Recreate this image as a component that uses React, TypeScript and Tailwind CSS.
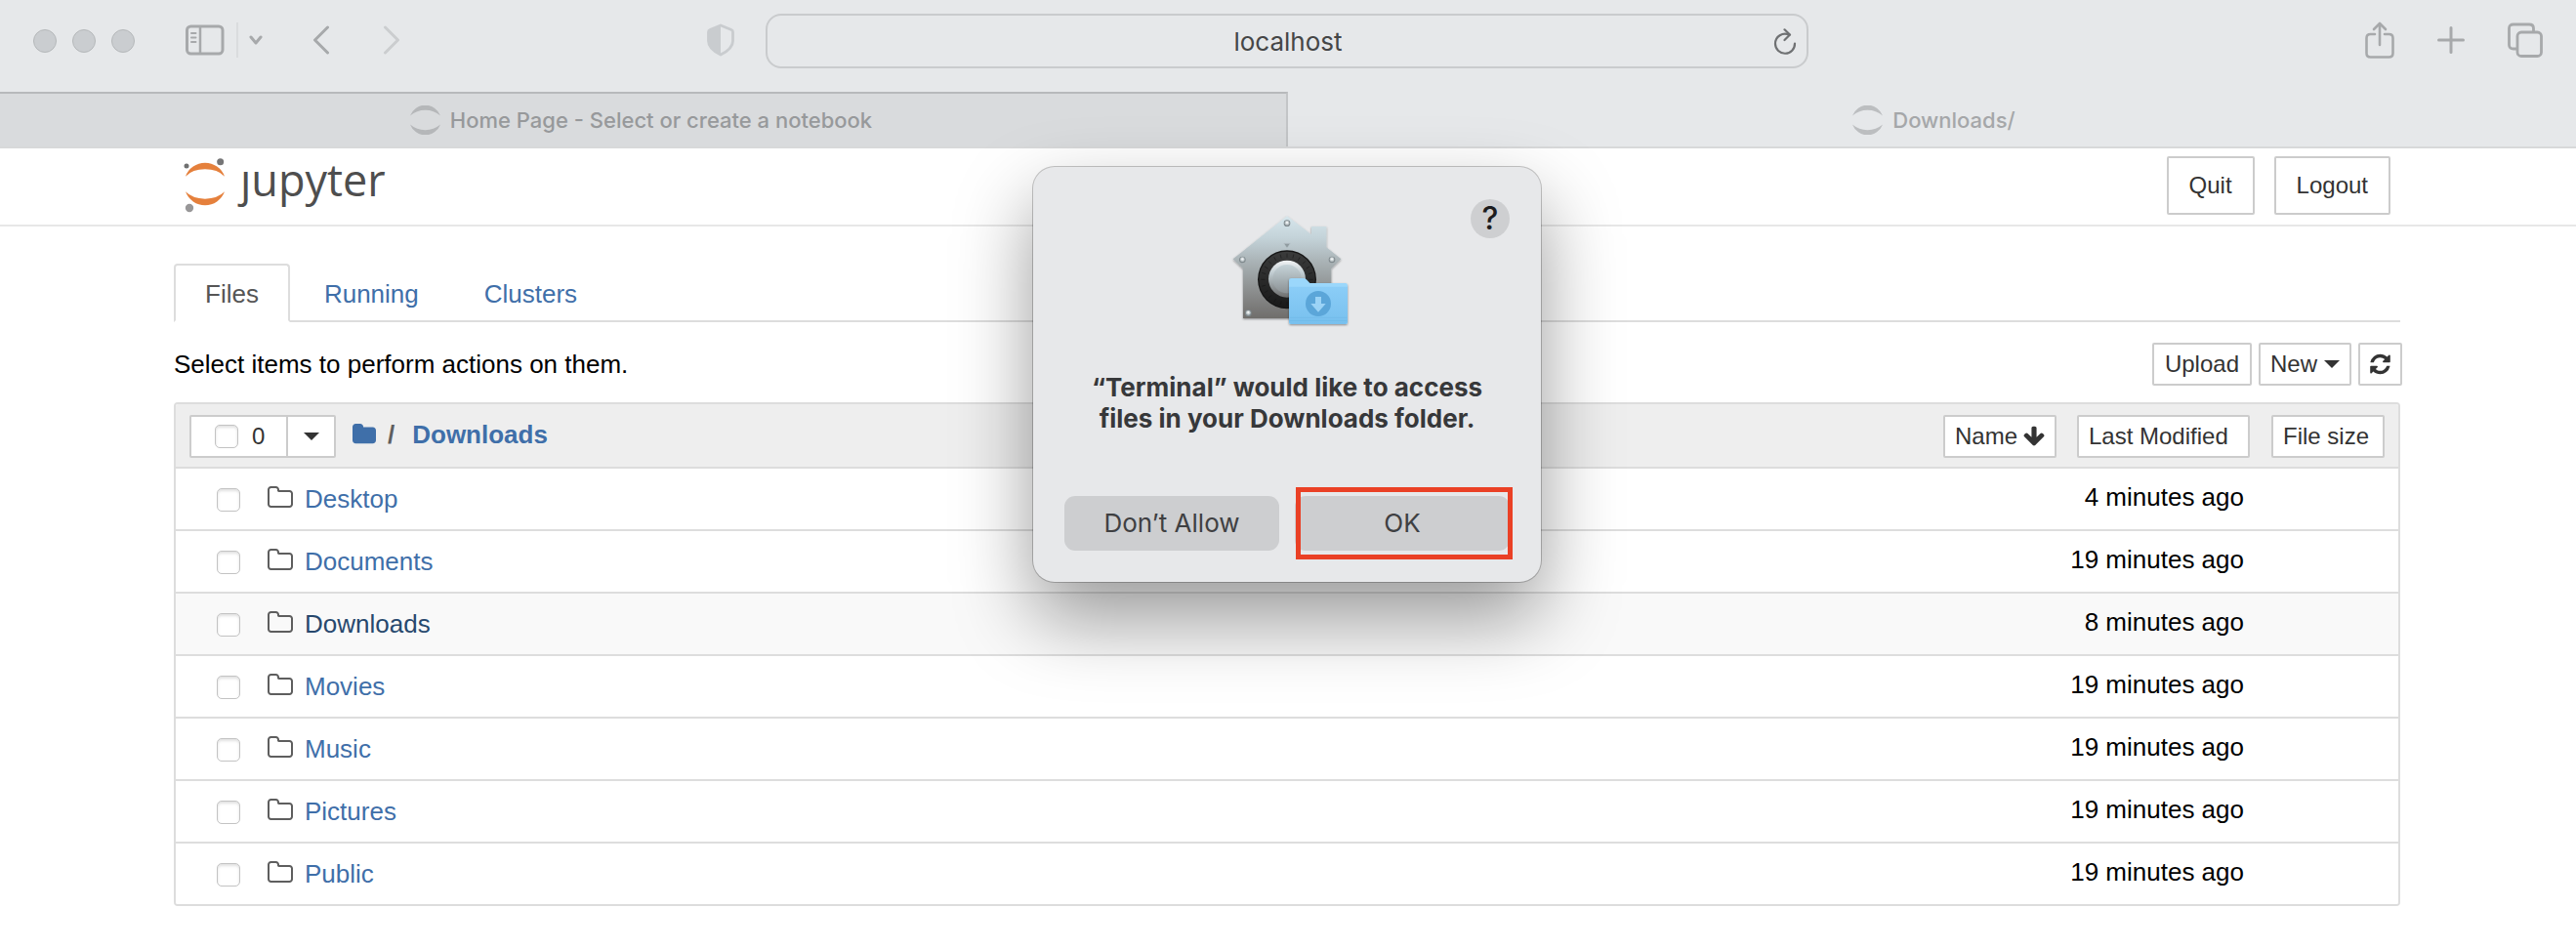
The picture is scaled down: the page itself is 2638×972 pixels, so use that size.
import React from "react";

const FILES = [
  { name: "Desktop", modified: "4 minutes ago" },
  { name: "Documents", modified: "19 minutes ago" },
  { name: "Downloads", modified: "8 minutes ago", hovered: true },
  { name: "Movies", modified: "19 minutes ago" },
  { name: "Music", modified: "19 minutes ago" },
  { name: "Pictures", modified: "19 minutes ago" },
  { name: "Public", modified: "19 minutes ago" },
];

const CHECKBOX =
  "size-6 shrink-0 appearance-none rounded-[5px] border border-[#c3c3c3] bg-white shadow-[inset_0_2px_3px_rgba(0,0,0,0.12)]";

const BUTTON =
  "flex h-11 items-center rounded-[2px] border-2 border-[#ccc] bg-white text-[24px] leading-9 font-normal text-[#333]";

function SidebarIcon() {
  return (
    <svg className="h-8 w-10" viewBox="0 0 40 32" fill="none" stroke="#a7a9ab" strokeWidth="3">
      <rect x="1.5" y="2" width="36.5" height="28" rx="4" />
      <path d="M15 2v28" strokeWidth="2.5" />
      <path d="M6 9h4.500M6 13.500h4.500M6 18h4.500" strokeWidth="2" strokeLinecap="round" />
    </svg>
  );
}

function ShieldIcon() {
  return (
    <svg className="h-[34px] w-7" viewBox="0 0 28 34">
      <path
        d="M14 2 25 6.500Q26.500 7 26.500 9V18Q26.500 26 14 32Q1.500 26 1.500 18V9Q1.500 7 3 6.500Z"
        fill="none"
        stroke="#c9cccf"
        strokeWidth="2.800"
        strokeLinejoin="round"
      />
      <path d="M14 2 3 6.500Q1.500 7 1.500 9V18Q1.500 26 14 32Z" fill="#c9cccf" />
    </svg>
  );
}

function RingIcon({ className }: { className: string }) {
  return (
    <svg className={"h-[30px] w-[31px] " + className} viewBox="0 0 31 30" fill="currentColor">
      <path d="M0 10.500A16.500 16.500 0 0 1 31 10.500A24 24 0 0 0 0 10.500Z" />
      <path d="M0 19.500A16.500 16.500 0 0 0 31 19.500A24 24 0 0 1 0 19.500Z" />
    </svg>
  );
}

function JupyterMark() {
  return (
    <svg className="h-[66px] w-[54px]" viewBox="18 0 162 198">
      <path d="M30 86A64 64 0 0 1 150 86Q128 64 90 64T30 86Z" fill="#e5803c" />
      <path d="M30 133A64 64 0 0 0 150 133Q128 155 90 155T30 133Z" fill="#e5803c" />
      <circle cx="33" cy="54" r="7.500" fill="#6f7070" />
      <circle cx="137" cy="41" r="10.500" fill="#767677" />
      <circle cx="42" cy="183" r="12.500" fill="#989798" />
    </svg>
  );
}

function FolderOutline() {
  return (
    <svg className="mb-[2px] size-7 shrink-0" viewBox="0 0 1792 1792" fill="#5e5e5e">
      <path d="M1600 1312v-704q0-40-28-68t-68-28h-704q-40 0-68-28t-28-68v-64q0-40-28-68t-68-28h-320q-40 0-68 28t-28 68v960q0 40 28 68t68 28h1216q40 0 68-28t28-68zm128-704v704q0 92-66 158t-158 66h-1216q-92 0-158-66t-66-158v-960q0-92 66-158t158-66h320q92 0 158 66t66 158v32h672q92 0 158 66t66 158z" />
    </svg>
  );
}

function FolderSolid() {
  return (
    <svg className="h-[26px] w-6" viewBox="64 0 1664 1792" fill="#3f6fa9">
      <path d="M1728 608v704q0 92-66 158t-158 66h-1216q-92 0-158-66t-66-158v-960q0-92 66-158t158-66h320q92 0 158 66t66 158v32h672q92 0 158 66t66 158z" />
    </svg>
  );
}

function ArrowDown() {
  return (
    <svg className="h-6 w-[22px]" viewBox="76 0 1640 1792" fill="#333">
      <path d="M1675 832q0 53-37 90l-651 652q-39 37-91 37-53 0-90-37l-651-652q-38-36-38-90 0-53 38-91l74-75q39-37 91-37 53 0 90 37l294 294v-704q0-52 38-90t90-38h128q52 0 90 38t38 90v704l294-294q37-37 90-37 52 0 91 37l75 75q37 39 37 91z" />
    </svg>
  );
}

function Refresh() {
  return (
    <svg className="h-6 w-[21px]" viewBox="128 0 1536 1792" fill="#333">
      <path d="M1639 1056q0 5-1 7-64 268-268 434.500t-478 166.500q-146 0-282.500-55t-243.500-157l-129 129q-19 19-45 19t-45-19-19-45v-448q0-26 19-45t45-19h448q26 0 45 19t19 45-19 45l-137 137q71 66 161 102t187 36q134 0 250-65t186-179q11-17 53-117 8-23 30-23h192q13 0 22.500 9.500t9.500 22.500zm25-800v448q0 26-19 45t-45 19h-448q-26 0-45-19t-19-45 19-45l138-138q-148-137-349-137-134 0-250 65t-186 179q-11 17-53 117-8 23-30 23h-199q-13 0-22.500-9.500t-9.500-22.500v-7q65-268 270-434.500t480-166.500q146 0 284 55.500t245 156.500l130-129q19-19 45-19t45 19 19 45z" />
    </svg>
  );
}

function Caret() {
  return (
    <svg className="h-2 w-4" viewBox="0 0 16 8" fill="#333">
      <path d="M0 0h16L8 8Z" />
    </svg>
  );
}

function VaultHouse() {
  const ticks = Array.from({ length: 24 }, (_, i) => i * 15);
  return (
    <svg className="h-[130px] w-[136px]" viewBox="0 0 408 390">
      <defs>
        <linearGradient id="steel" x1="0" y1="0" x2="0" y2="1">
          <stop offset="0" stopColor="#d6e6ec" />
          <stop offset="0.22" stopColor="#c3d2d8" />
          <stop offset="0.45" stopColor="#a9b2b5" />
          <stop offset="0.75" stopColor="#8a8c8c" />
          <stop offset="1" stopColor="#6f6d6b" />
        </linearGradient>
        <linearGradient id="knob" x1="0" y1="0" x2="0" y2="1">
          <stop offset="0" stopColor="#f2f4f5" />
          <stop offset="0.35" stopColor="#bfcbd0" />
          <stop offset="1" stopColor="#6d6e6e" />
        </linearGradient>
        <linearGradient id="knobFace" x1="0" y1="0" x2="0" y2="1">
          <stop offset="0" stopColor="#c6d4d9" />
          <stop offset="1" stopColor="#8b9194" />
        </linearGradient>
        <linearGradient id="dial" x1="0" y1="0" x2="0" y2="1">
          <stop offset="0" stopColor="#3a3b3b" />
          <stop offset="1" stopColor="#191919" />
        </linearGradient>
        <linearGradient id="folder" x1="0" y1="0" x2="0" y2="1">
          <stop offset="0" stopColor="#8bcdf7" />
          <stop offset="1" stopColor="#78c0ee" />
        </linearGradient>
        <filter id="drop" x="-10%" y="-10%" width="120%" height="120%">
          <feDropShadow dx="0" dy="3" stdDeviation="3" floodOpacity="0.4" />
        </filter>
      </defs>
      <path
        d="M204 28 279 85V60H325V124L370 160 340 189V342H69V189L38 160Z"
        fill="url(#steel)"
        filter="url(#drop)"
      />
      <path d="M194 112H214L204 127Z" fill="#8f9b9f" stroke="#b9c6cb" strokeWidth="2" />
      <circle cx="204" cy="223" r="90" fill="#161616" />
      <circle cx="204" cy="223" r="86" fill="url(#dial)" />
      {ticks.map((angle) => (
        <path
          key={angle}
          d="M204 143v12"
          stroke="#111"
          strokeOpacity="0.7"
          strokeWidth="2"
          transform={"rotate(" + angle + " 204 223)"}
        />
      ))}
      <circle cx="204" cy="221" r="57" fill="url(#knob)" />
      <circle cx="204" cy="221" r="44" fill="url(#knobFace)" />
      {[
        [204, 50],
        [67, 162],
        [342, 162],
        [85, 326],
      ].map(([x, y]) => (
        <g key={x + "-" + y}>
          <circle cx={x} cy={y} r="10" fill="#7f898d" />
          <circle cx={x} cy={y - 1} r="7" fill="#c3cbce" />
          <circle cx={x} cy={y - 2} r="3.500" fill="#f0f3f4" />
        </g>
      ))}
      <g filter="url(#drop)">
        <path d="M210 226Q210 219 217 219H255Q261 219 265 224L274 234H383Q390 234 390 241V353Q390 360 383 360H217Q210 360 210 353Z" fill="#9bd7fb" />
        <path d="M210 245H390V353Q390 360 383 360H217Q210 360 210 353Z" fill="url(#folder)" />
      </g>
      <path d="M212 340H388M212 349H388" stroke="#69b2e3" strokeWidth="1.500" />
      <circle cx="300" cy="297" r="39" fill="#5ba6d9" />
      <path d="M291 276H309V297H323L300 323 277 297H291Z" fill="#9bd3f6" />
    </svg>
  );
}

function BrowserChrome() {
  return (
    <header className="bg-[#e6e8ea] font-[Inter,'Noto_Sans',sans-serif]">
      <div className="grid h-[94px] grid-cols-[1fr_40.5%_1fr] items-center pr-[2px] pb-[10px]">
        <div className="flex items-center pr-8 pl-[34px]">
          <div className="flex gap-4">
            {["Close", "Minimize", "Zoom"].map((label) => (
              <button key={label} aria-label={label} className="size-6 rounded-full border border-[#b5b8ba] bg-[#cacdd0]" />
            ))}
          </div>
          <div className="flex flex-1 items-center pb-[2px] pl-[52px]">
            <button aria-label="Sidebar"><SidebarIcon /></button>
            <span className="ml-3 h-9 w-[2px] bg-[#dadcde]" />
            <button aria-label="Tab groups" className="ml-[11px]">
              <svg className="h-[10px] w-[14px]" viewBox="0 0 14 10" fill="none" stroke="#a7a9ab" strokeWidth="3" strokeLinecap="round" strokeLinejoin="round">
                <path d="M2 2l5 6 5-6" />
              </svg>
            </button>
            <button aria-label="Back" className="ml-[51px]">
              <svg className="h-[30px] w-[18px]" viewBox="0 0 18 30" fill="none" stroke="#a7a9ab" strokeWidth="3" strokeLinecap="round" strokeLinejoin="round">
                <path d="M15.500 2 2.500 15l13 13" />
              </svg>
            </button>
            <button aria-label="Forward" className="ml-[54px]">
              <svg className="h-[30px] w-[18px]" viewBox="0 0 18 30" fill="none" stroke="#cbcdcf" strokeWidth="3" strokeLinecap="round" strokeLinejoin="round">
                <path d="M2.500 2 15.500 15l-13 13" />
              </svg>
            </button>
            <button aria-label="Privacy report" className="ml-auto"><ShieldIcon /></button>
          </div>
        </div>
        <div className="flex h-14 items-center rounded-[16px] border-2 border-[#c9cbcd] pr-[10px] pl-9">
          <input
            aria-label="Address"
            defaultValue="localhost"
            className="w-full min-w-0 flex-1 bg-transparent pt-[2px] text-center text-[26px] leading-8 text-[#454647] outline-none"
          />
          <button aria-label="Reload">
            <svg className="h-[27px] w-[24px]" viewBox="0 0 24 27" fill="none" stroke="#6f7173" strokeWidth="2.200" strokeLinecap="round" strokeLinejoin="round">
              <path d="M11.500 1.300l5.500 5.200-5.500 5.500" />
              <path d="M16.500 6.800A10 10 0 0 0 2 16A10 10 0 0 0 22 15.500" />
            </svg>
          </button>
        </div>
        <div className="flex items-center justify-end gap-[44px] pr-8 pb-[2px]">
          <button aria-label="Share">
            <svg className="h-[38px] w-[30px]" viewBox="0 0 30 38" fill="none" stroke="#a7a9ab" strokeWidth="2.600" strokeLinecap="round" strokeLinejoin="round">
              <path d="M10 13H5.500Q1.500 13 1.500 17V32.500Q1.500 36.500 5.500 36.500H24.500Q28.500 36.500 28.500 32.500V17Q28.500 13 24.500 13H20" />
              <path d="M15 24V2M9 8l6-6 6 6" />
            </svg>
          </button>
          <button aria-label="New tab">
            <svg className="size-7" viewBox="0 0 28 28" fill="none" stroke="#a7a9ab" strokeWidth="3" strokeLinecap="round">
              <path d="M14 1.500v25M1.500 14h25" />
            </svg>
          </button>
          <button aria-label="Tab overview">
            <svg className="h-9 w-9" viewBox="0 0 36 36" fill="none" stroke="#a7a9ab" strokeWidth="2.800" strokeLinejoin="round">
              <rect x="10" y="10" width="24.500" height="24.500" rx="4" />
              <path d="M10 27H6Q1.500 27 1.500 23V6Q1.500 2 6 2H22Q26.500 2 26.500 6V10" />
            </svg>
          </button>
        </div>
      </div>
      <div className="grid h-[58px] grid-cols-2 border-b-2 border-[#d8d9da] text-[22px] font-medium">
        <a href="#home" className="flex items-center justify-center gap-[10px] border-t-2 border-r-2 border-t-[#b7b9bb] border-r-[#c3c5c7] bg-[#d9dbdd] pr-1 text-[#97999b]">
          <RingIcon className="text-[#b5b7b9]" />
          Home Page - Select or create a notebook
        </a>
        <a href="#downloads" className="flex items-center justify-center gap-[10px] pt-[2px] pl-1 text-[#a5a7a9]">
          <RingIcon className="text-[#bcbec0]" />
          Downloads/
        </a>
      </div>
    </header>
  );
}

function PermissionDialog() {
  return (
    <div className="absolute inset-x-0 top-0 flex justify-center pt-[171px] pr-[2px]">
      <div
        role="alertdialog"
        aria-labelledby="permission-title"
        className="relative flex w-[520px] flex-col items-center rounded-[22px] bg-[#e7e8ea] px-8 pt-[41px] pb-8 font-[Inter,'Noto_Sans',sans-serif] shadow-[0_0_0_1px_rgba(0,0,0,0.22),0_36px_80px_rgba(0,0,0,0.4)]"
      >
        <button aria-label="Help" className="absolute top-[33px] right-8 size-10 rounded-full bg-[#cecfd1] text-[32px] leading-10 font-medium text-[#1c1c1e]">
          ?
        </button>
        <VaultHouse />
        <h2 id="permission-title" className="mt-[39px] text-center text-[26px] leading-8 font-bold whitespace-nowrap text-[#37383a]">
          “Terminal” would like to access
          <br />
          files in your Downloads folder.
        </h2>
        <div className="mt-[63px] grid w-full grid-cols-2 gap-4 text-[26px] text-[#3f4042]">
          <button className="h-14 rounded-[11px] bg-[#cdced0] pb-[2px]">Don’t Allow</button>
          <div className="relative">
            <button className="h-14 w-full rounded-[11px] bg-[#cdced0] pb-[2px]">OK</button>
            <span className="pointer-events-none absolute -inset-y-[9px] -right-[3px] left-px border-[5px] border-[#ea4025]" />
          </div>
        </div>
      </div>
    </div>
  );
}

export default function App() {
  return (
    <div className="relative min-h-screen overflow-hidden bg-white font-['Liberation_Sans',Arial,sans-serif] text-[26px] text-black">
      <BrowserChrome />

      <div className="flex h-20 items-start justify-between border-b-2 border-[#e7e7e7] pr-[190px] pl-[186px]">
        <a href="#jupyter" aria-label="jupyter" className="flex items-start">
          <JupyterMark />
          <span className="pl-[6px] font-['Open_Sans','Noto_Sans',sans-serif] text-[45px] leading-[64px] text-[#4e4e4e]">ȷupyter</span>
        </a>
        <div className="flex gap-5 pt-2">
          {["Quit", "Logout"].map((label) => (
            <button key={label} className="h-[60px] rounded-[2px] border-2 border-[#ccc] bg-white px-[21px] text-[24px] text-[#333]">
              {label}
            </button>
          ))}
        </div>
      </div>

      <main className="px-[178px] pt-[38px]">
        <ul className="mr-[2px] flex gap-[3px] border-b-2 border-[#ddd]">
          <li className="-mb-[2px]">
            <a href="#files" className="flex h-[60px] items-center rounded-t-[4px] border-2 border-[#ddd] border-b-white bg-white px-[30px] pt-[2px] text-[#555]">Files</a>
          </li>
          {["Running", "Clusters"].map((tab) => (
            <li key={tab} className="-mb-[2px]">
              <a href={"#" + tab} className="flex h-[60px] items-center px-8 pt-[2px] text-[#3f6fa9]">{tab}</a>
            </li>
          ))}
        </ul>

        <div className="flex items-center justify-between pt-[21px] pb-[17px]">
          <p>Select items to perform actions on them.</p>
          <div className="flex gap-[7px]">
            <button className={BUTTON + " px-[11px]"}>Upload</button>
            <button className={BUTTON + " gap-[7px] px-[10px]"}>New <Caret /></button>
            <button aria-label="Refresh" className={BUTTON + " px-[10px]"}><Refresh /></button>
          </div>
        </div>

        <div className="mr-[2px] overflow-hidden rounded-[4px] border-2 border-[#ddd]">
          <table className="w-full table-fixed border-separate border-spacing-0">
            <colgroup>
              <col />
              <col className="w-[198px]" />
              <col className="w-[152px]" />
            </colgroup>
            <thead className="bg-[#eee]">
              <tr>
                <th className="border-b-2 border-[#ddd] p-0 pt-[11px] pb-[9px] pl-[14px]">
                  <div className="flex items-center">
                    <label className={BUTTON + " w-[101px] gap-[14px] rounded-r-none pl-6"}>
                      <input type="checkbox" className={CHECKBOX} />
                      0
                    </label>
                    <button aria-label="Select by type" className={BUTTON + " -ml-[2px] w-[51px] justify-center rounded-l-none"}>
                      <Caret />
                    </button>
                    <nav aria-label="Path" className="flex items-center pb-[4px] pl-[17px]">
                      <a href="#root" aria-label="Root folder"><FolderSolid /></a>
                      <span className="pl-3 text-[#5e5e5e]">/</span>
                      <a href="#downloads" className="pl-[18px] text-[#3f6fa9]">Downloads</a>
                    </nav>
                    <button className={BUTTON + " ml-auto gap-[6px] px-[10px]"}>Name <ArrowDown /></button>
                  </div>
                </th>
                <th className="border-b-2 border-[#ddd] p-0 pt-[11px] pb-[9px]">
                  <button className={BUTTON + " ml-auto w-[177px] pl-[10px]"}>Last Modified</button>
                </th>
                <th className="border-b-2 border-[#ddd] p-0 pt-[11px] pr-[14px] pb-[9px]">
                  <button className={BUTTON + " ml-auto w-[116px] pl-[10px]"}>File size</button>
                </th>
              </tr>
            </thead>
            <tbody className="[&>tr:last-child>td]:border-b-0">
              {FILES.map((file) => (
                <tr key={file.name} className={file.hovered ? "bg-[#f9f9f9]" : "bg-white"}>
                  <td className="border-b-2 border-[#ddd] p-0 pl-[42px]">
                    <div className="flex h-[62px] items-center">
                      <input type="checkbox" aria-label={file.name} className={CHECKBOX + " mt-[2px]"} />
                      <a
                        href={"#" + file.name}
                        className={"flex items-center gap-[11px] pl-[27px] " + (file.hovered ? "text-[#27486d]" : "text-[#3f6fa9]")}
                      >
                        <FolderOutline />
                        {file.name}
                      </a>
                    </div>
                  </td>
                  <td className="border-b-2 border-[#ddd] p-0 pr-[6px] pb-1 text-right">{file.modified}</td>
                  <td className="border-b-2 border-[#ddd] p-0" />
                </tr>
              ))}
            </tbody>
          </table>
        </div>
      </main>

      <PermissionDialog />
    </div>
  );
}
